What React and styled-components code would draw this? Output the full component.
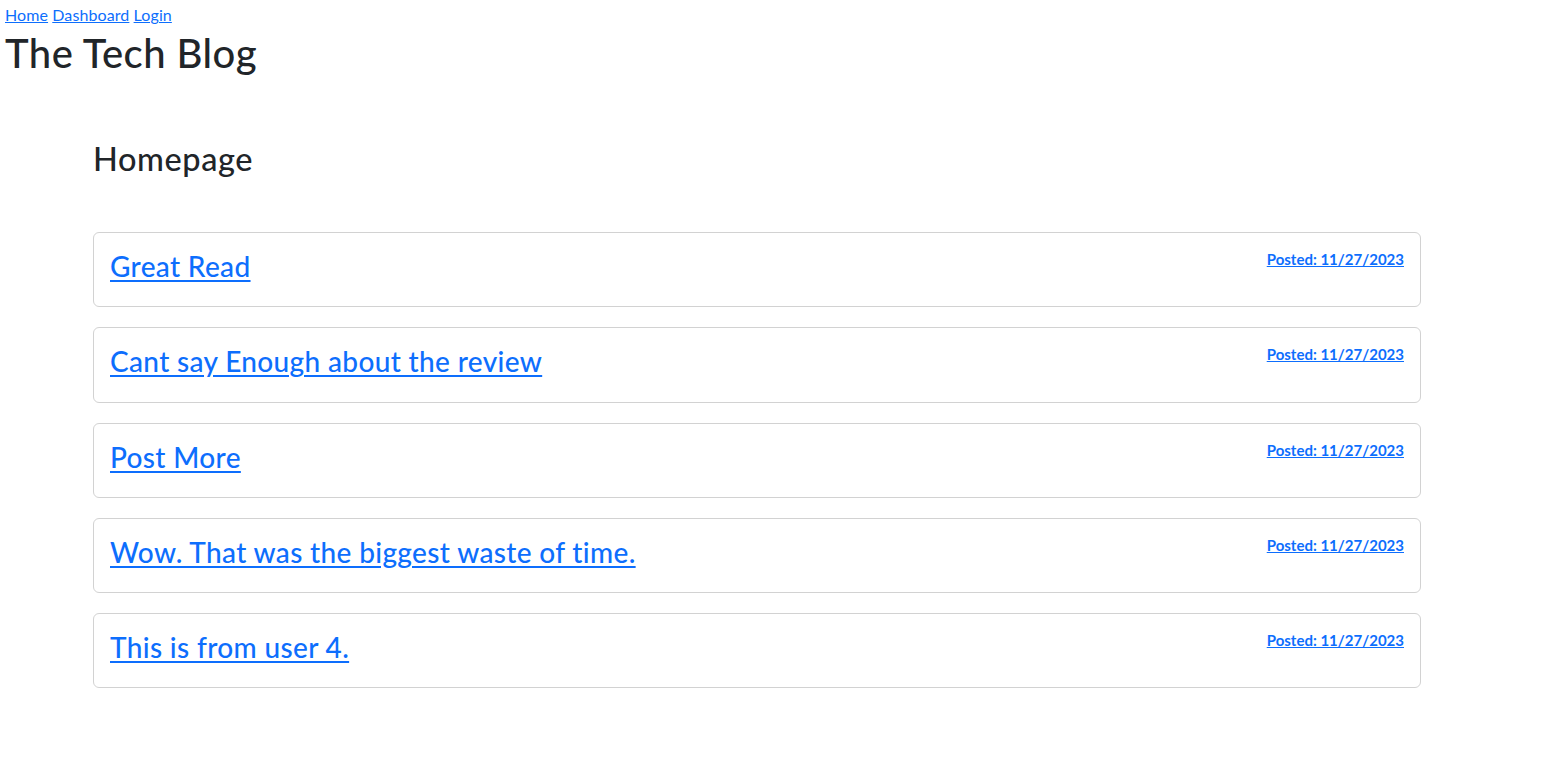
import React from "react";
import styled, { createGlobalStyle } from "styled-components";

const GlobalStyle = createGlobalStyle`
  * { box-sizing: border-box; }
  html, body { margin: 0; padding: 0; background: #ffffff; }
  body {
    font-family: Lato, "Noto Sans", "Liberation Sans", sans-serif;
    font-size: 16px;
    line-height: 1.5;
    color: #212529;
  }
`;

const Header = styled.header`
  padding: 3px 5px 0;
`;

const Nav = styled.nav`
  font-size: 16px;
  line-height: 24px;
  letter-spacing: 0.1px;
`;

const NavLink = styled.a`
  color: #0d6efd;
  text-decoration: underline;
  cursor: pointer;
`;

const SiteTitle = styled.h1`
  margin: 2px 0 0;
  font-size: 40px;
  font-weight: 500;
  line-height: 48px;
  letter-spacing: 0.45px;
  color: #212529;
`;

const Main = styled.main`
  padding: 63px 0 0 93px;
  width: 1421px;
`;

const PageTitle = styled.h2`
  margin: 0 0 54px;
  font-size: 32.5px;
  font-weight: 500;
  line-height: 38px;
  letter-spacing: 0.6px;
  color: #212529;
`;

const PostList = styled.div`
  display: flex;
  flex-direction: column;
  gap: 20px;
`;

const Card = styled.article`
  border: 1px solid #d2d2d2;
  border-radius: 6px;
  background: #fff;
`;

const CardBody = styled.div`
  display: flex;
  justify-content: space-between;
  align-items: flex-start;
  padding: 16px;
`;

const PostTitle = styled.h3`
  margin: 1px 0 7px;
  font-size: 28px;
  font-weight: 500;
  line-height: 33.3px;
  letter-spacing: 0.35px;
`;

const PostLink = styled.a`
  color: #0d6efd;
  text-decoration: underline;
  text-underline-offset: 3px;
  cursor: pointer;
`;

const PostDate = styled.a`
  margin-top: 0;
  font-size: 15px;
  font-weight: 700;
  line-height: 20px;
  color: #0d6efd;
  text-decoration: underline;
  white-space: nowrap;
  cursor: pointer;
`;

const posts = [
  "Great Read",
  "Cant say Enough about the review",
  "Post More",
  "Wow. That was the biggest waste of time.",
  "This is from user 4.",
];

export default function App() {
  return (
    <>
      <GlobalStyle />
      <Header>
        <Nav>
          <NavLink href="#">Home</NavLink> <NavLink href="#">Dashboard</NavLink>{" "}
          <NavLink href="#">Login</NavLink>
        </Nav>
        <SiteTitle>The Tech Blog</SiteTitle>
      </Header>
      <Main>
        <PageTitle>Homepage</PageTitle>
        <PostList>
          {posts.map((title) => (
            <Card key={title}>
              <CardBody>
                <PostTitle>
                  <PostLink href="#">{title}</PostLink>
                </PostTitle>
                <PostDate href="#">Posted: 11/27/2023</PostDate>
              </CardBody>
            </Card>
          ))}
        </PostList>
      </Main>
    </>
  );
}
